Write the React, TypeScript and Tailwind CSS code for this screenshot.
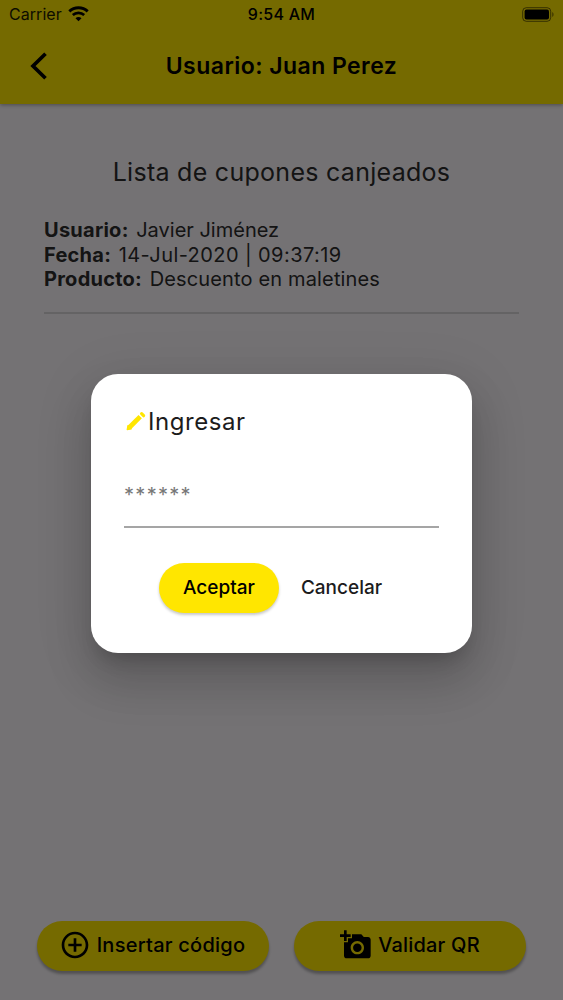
import React from 'react';
import { MdAddAPhoto, MdAddCircleOutline } from 'react-icons/md';

const coupon = [
  { label: 'Usuario:', value: 'Javier Jiménez', spacing: 'tracking-normal' },
  { label: 'Fecha:', value: '14-Jul-2020 | 09:37:19', spacing: 'tracking-[0.42px]' },
  { label: 'Producto:', value: 'Descuento en maletines', spacing: 'tracking-[0.15px]' },
];

const StatusBar = () => (
  <div className="grid h-7 grid-cols-3 items-center px-[9px] text-[16px] leading-none">
    <div className="flex items-center gap-1.5">
      <span className="tracking-[0.05px] text-[#1c1c00]">Carrier</span>
      <svg width="21" height="16" viewBox="0 0 21 16" fill="none" stroke="currentColor">
        <path d="M1.3 5.4C6.4.6 14.6.6 19.7 5.4" strokeWidth="2.9" />
        <path d="M4.8 9.1C8 6.2 13 6.2 16.2 9.1" strokeWidth="2.7" />
        <path d="M10.5 15.2 7.5 12.2c1.7-1.6 4.3-1.6 6 0z" fill="currentColor" stroke="none" />
      </svg>
    </div>
    <span className="text-center font-medium tracking-[0.25px]">9:54 AM</span>
    <svg className="-mr-px justify-self-end" width="33" height="15" viewBox="0 0 33 15">
      <rect x="0.7" y="0.7" width="28" height="13.6" rx="3.6" fill="none" stroke="currentColor" strokeOpacity="0.55" />
      <rect x="2.6" y="2.6" width="24.4" height="9.8" rx="1.9" fill="currentColor" />
      <path d="M30.3 5v5c1.6-.7 1.6-4.3 0-5z" fill="currentColor" fillOpacity="0.55" />
    </svg>
  </div>
);

const PencilIcon = () => (
  <svg className="size-6" viewBox="0 0 24 24" fill="none" stroke="#ffe600">
    <path d="M5.6 17.2 16.2 6.6" strokeWidth="4.8" />
    <path d="M3.9 15.5 7.3 18.9 3.2 19.7z" fill="#ffe600" strokeWidth="1.2" strokeLinejoin="round" />
    <path d="m17.6 3.7 2 2" strokeWidth="3.2" strokeLinecap="round" />
  </svg>
);

const IngresarDialog = () => (
  <div className="h-[279px] w-[381px] rounded-[27px] bg-white px-[33px] text-[#1c1c1c] shadow-[0_13px_18px_-8px_rgba(0,0,0,0.2),0_28px_45px_4px_rgba(0,0,0,0.14),0_10px_54px_9px_rgba(0,0,0,0.08)]">
    <div className="flex h-[95px] items-center">
      <PencilIcon />
      <h2 className="pt-px text-[24px] tracking-[0.55px]">Ingresar</h2>
    </div>
    <div className="h-[59px] border-b-2 border-[#a5a5a5] pt-3 text-[20px] leading-7 tracking-[1.3px] text-[#777]">
      ******
    </div>
    <div className="mt-[35px] flex justify-center gap-[22px] pr-[22px] text-[19px] font-medium">
      <button className="h-[50px] w-[120px] rounded-full bg-[#ffe600] text-black shadow-[0_2px_3px_rgba(0,0,0,0.22)]">
        Aceptar
      </button>
      <button className="h-[50px]">Cancelar</button>
    </div>
  </div>
);

const App = () => {
  return (
    <div className="relative h-[1000px] w-[563px] overflow-hidden font-['Inter',sans-serif]">
      <div className="flex h-full flex-col bg-[#fdf9fd] text-black">
        {/* Header */}
        <header className="h-[104px] bg-[#ffe600] shadow-[0_1px_4px_rgba(0,0,0,0.35)]">
          <StatusBar />
          <div className="grid h-[76px] grid-cols-[60px_1fr_60px] items-center">
            <svg className="ml-[29px]" width="20" height="28" viewBox="0 0 20 28" fill="none" stroke="currentColor">
              <path d="M16.5 1.8 4 14l12.5 12.2" strokeWidth="3.7" />
            </svg>
            <h1 className="text-center text-[23px] font-semibold tracking-[0.45px]">Usuario: Juan Perez</h1>
          </div>
        </header>

        {/* Coupons */}
        <main className="flex-1 px-[44px] pt-[52px] text-[#2c2c2c]">
          <h2 className="text-center text-[25px] leading-8 tracking-[0.28px]">Lista de cupones canjeados</h2>
          <ul className="mt-[30px] border-b-2 border-[#dad7da] pb-[20px] text-[20px] leading-[24.5px]">
            {coupon.map(({ label, value, spacing }) => (
              <li key={label}>
                <b className="mr-0.5 tracking-[0.25px]">{label}</b> <span className={spacing}>{value}</span>
              </li>
            ))}
          </ul>
        </main>

        {/* Bottom actions */}
        <footer className="flex justify-between px-[37px] pb-[29px] text-[20px] font-medium">
          <button className="flex h-[50px] w-[232px] items-center justify-center gap-1.5 rounded-full bg-[#ffe600] pr-0.5 pb-0.5 tracking-[0.25px] shadow-[0_3px_3px_rgba(0,0,0,0.3)]">
            <MdAddCircleOutline className="size-8" />
            Insertar código
          </button>
          <button className="flex h-[50px] w-[232px] items-center justify-center gap-1.5 rounded-full bg-[#ffe600] pb-0.5 tracking-[0.2px] shadow-[0_3px_3px_rgba(0,0,0,0.3)]">
            <MdAddAPhoto className="size-8" />
            Validar QR
          </button>
        </footer>
      </div>

      {/* Modal */}
      <div className="absolute inset-0 flex items-center justify-center bg-black/54 pt-[27px]">
        <IngresarDialog />
      </div>
    </div>
  );
};

export default App;
